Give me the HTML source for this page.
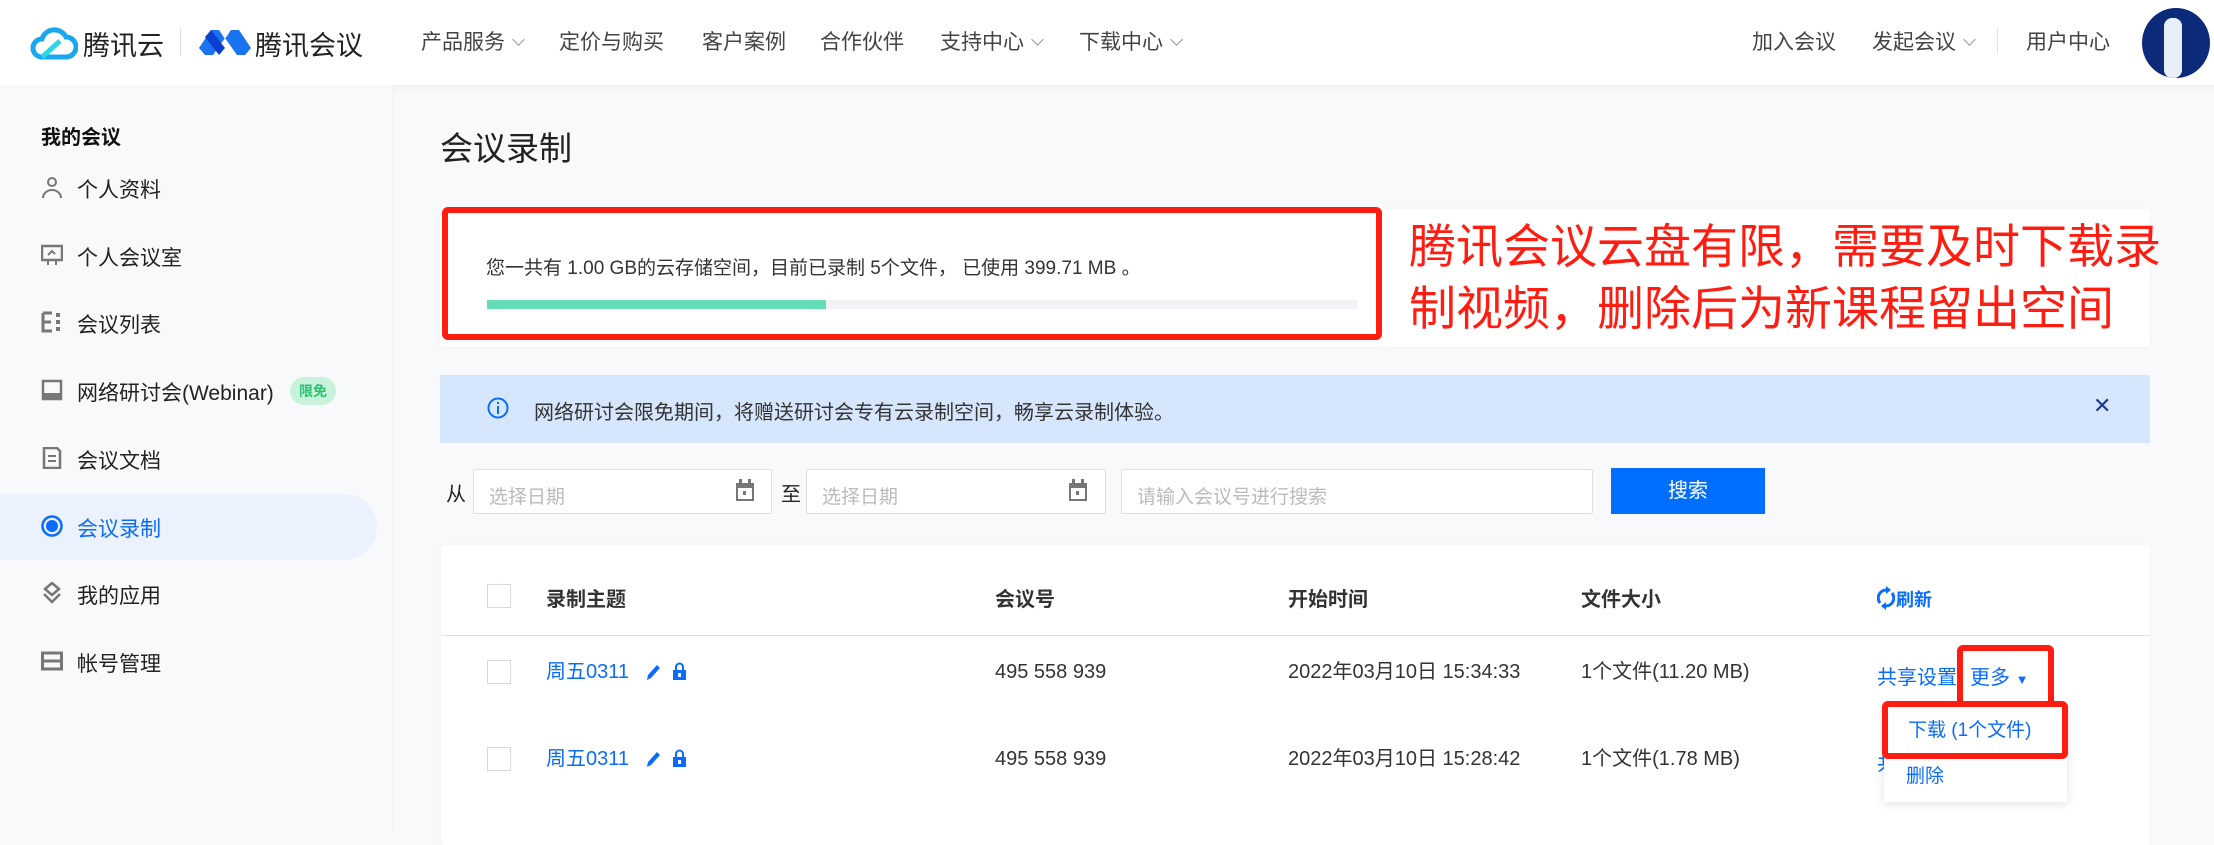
<!DOCTYPE html>
<html><head><meta charset="utf-8"><style>
*{margin:0;padding:0;box-sizing:border-box}
body{width:2214px;height:831px;overflow:hidden;background:#f8f9fb;font-family:"Liberation Sans","Noto Sans CJK SC",sans-serif;color:#333;position:relative}
.a{position:absolute;white-space:nowrap}
.hdr{position:absolute;left:0;top:0;width:2214px;height:85px;background:#fff;box-shadow:0 2px 8px rgba(0,0,0,.05)}
.nav{font-size:21px;color:#444;top:26px}
.chev{display:inline-block;width:9px;height:9px;border-right:1.5px solid #999;border-bottom:1.5px solid #999;transform:rotate(45deg);margin-left:9px;position:relative;top:-5px}
.side{position:absolute;left:0;top:85px;width:394px;height:746px;background:#f8f9fb;border-right:1px solid #eceef2}
.si{font-size:21px;color:#222;left:77px}
.ico{position:absolute;left:41px;width:22px;height:22px}
.card{position:absolute;background:#fff;border-radius:4px}
.red{position:absolute;border:6px solid #ff1d12;border-radius:6px}
.inp{position:absolute;top:469px;height:45px;background:#fff;border:1px solid #dcdfe6;border-radius:2px;font-size:19px;color:#bbb;padding:12px 15px}
.th{font-size:20px;font-weight:bold;color:#333;top:586px;line-height:28px}
.td{font-size:20px;color:#333;line-height:28px}
.cb{position:absolute;left:487px;width:24px;height:24px;border:1px solid #d5d8de;background:#fff}
.blue{color:#0a6cff}
</style></head><body>
<div class="hdr"></div>
<svg class="a" style="left:30px;top:24px" width="48" height="36" viewBox="0 0 48 36"><path d="M12 33 H36 a10 10 0 0 0 0-20 a13 13 0 0 0-24 2 a9 9 0 0 0 0 18Z" fill="none" stroke="#1ba7f0" stroke-width="5"/><path d="M12 33 L30 17" stroke="#30d5e6" stroke-width="5"/></svg>
<div class="a" style="left:83px;top:24px;font-size:27px;color:#222">腾讯云</div>
<div class="a" style="left:180px;top:28px;width:1px;height:28px;background:#ddd"></div>
<svg class="a" style="left:199px;top:28px" width="52" height="27" viewBox="0 0 52 27"><path d="M0 20 L12 2 L20 2 L26 11 L32 2 L40 2 L52 20 L46 27 L38 27 L26 10 L14 27 L6 27Z" fill="#1a73f0"/><path d="M12 2 L26 20 L20 27 L6 9Z" fill="#0a3fd0"/></svg>
<div class="a" style="left:255px;top:24px;font-size:27px;color:#222">腾讯会议</div>
<div class="a nav" style="left:421px">产品服务<span class="chev"></span></div>
<div class="a nav" style="left:559px">定价与购买</div>
<div class="a nav" style="left:702px">客户案例</div>
<div class="a nav" style="left:820px">合作伙伴</div>
<div class="a nav" style="left:940px">支持中心<span class="chev"></span></div>
<div class="a nav" style="left:1079px">下载中心<span class="chev"></span></div>
<div class="a nav" style="left:1752px">加入会议</div>
<div class="a nav" style="left:1872px">发起会议<span class="chev"></span></div>
<div class="a" style="left:1997px;top:28px;width:1px;height:26px;background:#e3e3e3"></div>
<div class="a nav" style="left:2026px">用户中心</div>
<div class="a" style="left:2142px;top:8px;width:68px;height:70px;border-radius:50%;background:#0c2a7a;overflow:hidden"><div style="position:absolute;left:22px;top:10px;width:18px;height:60px;background:#e8eef8;border-radius:8px"></div></div>

<div class="side"></div>
<div class="a" style="left:41px;top:121px;font-size:20px;font-weight:bold;color:#111">我的会议</div>
<div class="a" style="left:0;top:494px;width:377px;height:66px;background:#ecf2fd;border-radius:0 33px 33px 0"></div>
<svg class="ico" style="top:176px" viewBox="0 0 22 22"><circle cx="11" cy="6" r="4" fill="none" stroke="#777" stroke-width="2"/><path d="M2 22 a9 8 0 0 1 18 0" fill="none" stroke="#777" stroke-width="2"/></svg>
<div class="a si" style="top:174px">个人资料</div>
<svg class="ico" style="top:244px" viewBox="0 0 22 22"><rect x="1" y="2" width="20" height="14" fill="none" stroke="#777" stroke-width="2.5"/><path d="M7 16v5M15 16v5M7 11l4-4 3 3" stroke="#777" stroke-width="2" fill="none"/></svg>
<div class="a si" style="top:242px">个人会议室</div>
<svg class="ico" style="top:311px" viewBox="0 0 22 22"><path d="M2 2h9M2 2v18h9M2 11h8" stroke="#777" stroke-width="3" fill="none"/><rect x="15" y="2" width="4" height="4" fill="#777"/><rect x="15" y="9" width="4" height="4" fill="#777"/><rect x="15" y="16" width="4" height="4" fill="#777"/></svg>
<div class="a si" style="top:309px">会议列表</div>
<svg class="ico" style="top:379px" viewBox="0 0 22 22"><rect x="2" y="2" width="18" height="18" fill="none" stroke="#777" stroke-width="2.5"/><rect x="2" y="14" width="18" height="6" fill="#777"/></svg>
<div class="a si" style="top:377px">网络研讨会(Webinar)</div>
<div class="a" style="left:290px;top:377px;width:46px;height:28px;border-radius:14px;background:#c8f2dc;color:#2bc26e;font-size:14px;font-weight:bold;text-align:center;line-height:28px">限免</div>
<svg class="ico" style="top:447px" viewBox="0 0 22 22"><path d="M3 1h13l3 3v17H3Z" fill="none" stroke="#777" stroke-width="2.5"/><path d="M7 9h8M7 14h8" stroke="#777" stroke-width="2"/></svg>
<div class="a si" style="top:445px">会议文档</div>
<svg class="ico" style="top:515px" viewBox="0 0 22 22"><circle cx="11" cy="11" r="9.5" fill="none" stroke="#0a6cff" stroke-width="2.5"/><circle cx="11" cy="11" r="6" fill="#0a6cff"/></svg>
<div class="a si blue" style="top:513px">会议录制</div>
<svg class="ico" style="top:582px" viewBox="0 0 22 22"><path d="M11 1l7 6-7 6-7-6Z" fill="none" stroke="#777" stroke-width="2.5"/><path d="M3 12l8 8 8-8" fill="none" stroke="#777" stroke-width="2.5"/></svg>
<div class="a si" style="top:580px">我的应用</div>
<svg class="ico" style="top:650px" viewBox="0 0 22 22"><rect x="1.5" y="3" width="19" height="16" fill="none" stroke="#777" stroke-width="3"/><path d="M1.5 11h19" stroke="#777" stroke-width="3"/></svg>
<div class="a si" style="top:648px">帐号管理</div>

<div class="a" style="left:440px;top:122px;font-size:33px;color:#222">会议录制</div>
<div class="card" style="left:440px;top:209px;width:1710px;height:138px;box-shadow:0 1px 4px rgba(0,0,0,.04)"></div>
<div class="a" style="left:486px;top:253px;font-size:19px;color:#333">您一共有 1.00 GB的云存储空间，目前已录制 5个文件， 已使用 399.71 MB 。</div>
<div class="a" style="left:487px;top:300px;width:870px;height:9px;background:#f1f2f5"></div>
<div class="a" style="left:487px;top:300px;width:339px;height:9px;background:#62ddb5"></div>
<div class="red" style="left:442px;top:207px;width:940px;height:133px"></div>
<div class="a" style="left:1409px;top:216px;font-size:47px;line-height:62px;color:#ff1d12">腾讯会议云盘有限，需要及时下载录<br>制视频，删除后为新课程留出空间</div>

<div class="a" style="left:440px;top:375px;width:1710px;height:68px;background:#d5e6fd"></div>
<svg class="a" style="left:487px;top:397px" width="22" height="22" viewBox="0 0 22 22"><circle cx="11" cy="11" r="9.5" fill="none" stroke="#0a6cff" stroke-width="2"/><rect x="10" y="9" width="2" height="8" fill="#0a6cff"/><rect x="10" y="5" width="2" height="2" fill="#0a6cff"/></svg>
<div class="a" style="left:534px;top:396px;font-size:20px;color:#333">网络研讨会限免期间，将赠送研讨会专有云录制空间，畅享云录制体验。</div>
<div class="a" style="left:2093px;top:393px;font-size:22px;color:#1b3a8f">✕</div>

<div class="a" style="left:446px;top:478px;font-size:20px;color:#222">从</div>
<div class="inp" style="left:473px;width:299px">选择日期</div>
<svg class="a" style="left:735px;top:479px" width="20" height="23" viewBox="0 0 20 23"><rect x="1" y="4" width="18" height="18" fill="#777"/><rect x="3" y="9" width="14" height="11" fill="#fff"/><rect x="4" y="0" width="3" height="6" fill="#777"/><rect x="13" y="0" width="3" height="6" fill="#777"/><rect x="8" y="12" width="3" height="4" fill="#777"/></svg>
<div class="a" style="left:781px;top:478px;font-size:20px;color:#222">至</div>
<div class="inp" style="left:806px;width:300px">选择日期</div>
<svg class="a" style="left:1068px;top:479px" width="20" height="23" viewBox="0 0 20 23"><rect x="1" y="4" width="18" height="18" fill="#777"/><rect x="3" y="9" width="14" height="11" fill="#fff"/><rect x="4" y="0" width="3" height="6" fill="#777"/><rect x="13" y="0" width="3" height="6" fill="#777"/><rect x="8" y="12" width="3" height="4" fill="#777"/></svg>
<div class="inp" style="left:1121px;width:472px">请输入会议号进行搜索</div>
<div class="a" style="left:1611px;top:468px;width:154px;height:46px;background:#006eff;color:#fff;font-size:20px;text-align:center;line-height:46px">搜索</div>

<div class="card" style="left:441px;top:545px;width:1709px;height:300px;box-shadow:0 1px 4px rgba(0,0,0,.04)"></div>
<div class="cb" style="top:584px"></div>
<div class="a th" style="left:546px">录制主题</div>
<div class="a th" style="left:995px">会议号</div>
<div class="a th" style="left:1288px">开始时间</div>
<div class="a th" style="left:1581px">文件大小</div>
<svg class="a" style="left:1877px;top:586px" width="18" height="24" viewBox="0 0 18 24"><path d="M9 4 a8 8 0 0 0-6 13M9 20 a8 8 0 0 0 6-13" fill="none" stroke="#0a6cff" stroke-width="3"/><path d="M9 0v8l5-4Z M9 24v-8l-5 4Z" fill="#0a6cff"/></svg>
<div class="a th blue" style="left:1896px;font-size:18px;top:586px">刷新</div>
<div class="a" style="left:441px;top:635px;width:1709px;height:1px;background:#dcdfe6"></div>

<div class="cb" style="top:660px"></div>
<div class="a td blue" style="left:546px;top:658px">周五0311</div>
<div class="cb" style="top:747px"></div>
<div class="a td blue" style="left:546px;top:745px">周五0311</div>
<svg class="a" style="left:645px;top:662px" width="44" height="20" viewBox="0 0 44 20"><path d="M2 18l1-5 9-10 3 3-9 10Z" fill="#0a6cff"/><rect x="28" y="8" width="13" height="10" fill="#0a6cff"/><path d="M31 8v-3a3.5 3.5 0 0 1 7 0v3" fill="none" stroke="#0a6cff" stroke-width="2"/><rect x="33" y="11" width="3" height="4" fill="#fff"/></svg>
<svg class="a" style="left:645px;top:749px" width="44" height="20" viewBox="0 0 44 20"><path d="M2 18l1-5 9-10 3 3-9 10Z" fill="#0a6cff"/><rect x="28" y="8" width="13" height="10" fill="#0a6cff"/><path d="M31 8v-3a3.5 3.5 0 0 1 7 0v3" fill="none" stroke="#0a6cff" stroke-width="2"/><rect x="33" y="11" width="3" height="4" fill="#fff"/></svg>
<div class="a td" style="left:995px;top:658px">495 558 939</div>
<div class="a td" style="left:995px;top:745px">495 558 939</div>
<div class="a td" style="left:1288px;top:658px">2022年03月10日 15:34:33</div>
<div class="a td" style="left:1288px;top:745px">2022年03月10日 15:28:42</div>
<div class="a td" style="left:1581px;top:658px">1个文件(11.20 MB)</div>
<div class="a td" style="left:1581px;top:745px">1个文件(1.78 MB)</div>
<div class="a td blue" style="left:1877px;top:664px">共享设置</div>
<div class="a td blue" style="left:1877px;top:750px">共</div>
<div class="a td blue" style="left:1970px;top:664px">更多 <span style="font-size:13px">▼</span></div>
<div class="red" style="left:1957px;top:645px;width:97px;height:68px"></div>
<div class="a" style="left:1884px;top:703px;width:183px;height:99px;background:#fff;box-shadow:0 2px 10px rgba(0,0,0,.12)"></div>
<div class="a td blue" style="left:1908px;top:717px;font-size:19px">下载 (1个文件)</div>
<div class="a td blue" style="left:1906px;top:763px;font-size:19px">删除</div>
<div class="red" style="left:1882px;top:701px;width:186px;height:58px"></div>
</body></html>
